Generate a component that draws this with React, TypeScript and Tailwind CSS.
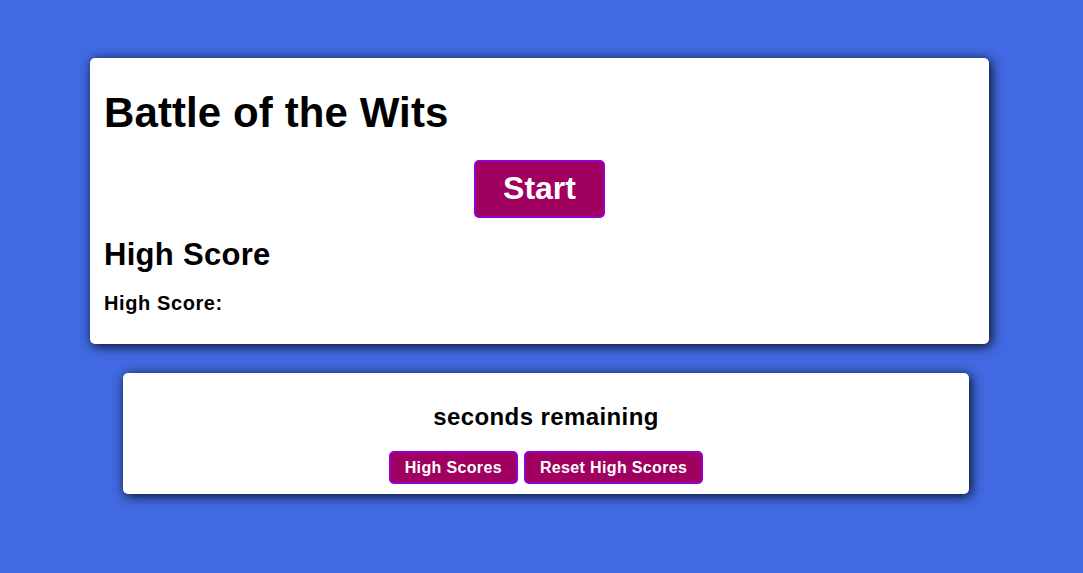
import React from "react";

export default function App() {
  const btn =
    "bg-[#a0005f] border-2 border-[#9400d3] text-white font-bold rounded-[5px]";
  return (
    <div
      className="min-h-[573px] w-full bg-[#4169e1] pt-[58px] pb-[78px] flex flex-col"
      style={{ fontFamily: '"Liberation Sans", Arial, sans-serif' }}
    >
      <div className="ml-[90px] w-[899px] bg-white rounded-[5px] shadow-[2px_2px_12px_rgba(0,0,0,0.9)] pt-[31px] pb-[29px] pl-[14px] pr-[12px]">
        <h1 className="text-[42px] leading-[48px] font-bold text-black tracking-[0.1px]">Battle of the Wits</h1>
        <div className="flex justify-center mt-[23px] -ml-[2px]">
          <button className={`${btn} text-[32px] leading-[37px] px-[27px] pt-[8px] pb-[9px]`}>Start</button>
        </div>
        <h2 className="mt-[19px] text-[31px] leading-[36px] font-bold text-black tracking-[0.3px]">High Score</h2>
        <p className="mt-[18px] text-[20px] leading-[24px] font-bold text-black tracking-[0.6px]">High Score:</p>
      </div>
      <div className="mt-[29px] ml-[123px] w-[846px] bg-white rounded-[5px] shadow-[2px_2px_12px_rgba(0,0,0,0.9)] pt-[30px] pb-[10px] flex flex-col items-center">
        <p className="text-[24px] leading-[28px] font-bold text-black tracking-[0.4px]">seconds remaining</p>
        <div className="mt-[20px] flex gap-[6px]">
          <button className={`${btn} text-[16px] leading-[18px] px-[14px] pt-[6px] pb-[5px] tracking-[0.35px]`}>High Scores</button>
          <button className={`${btn} text-[16px] leading-[18px] px-[14px] pt-[6px] pb-[5px] tracking-[0.35px]`}>Reset High Scores</button>
        </div>
      </div>
    </div>
  );
}
